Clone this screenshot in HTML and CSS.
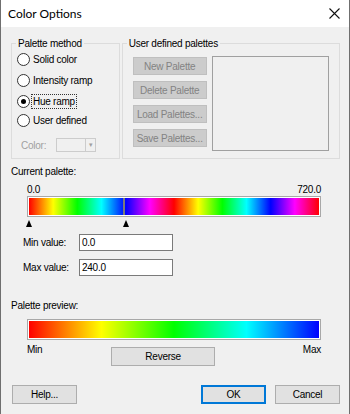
FILE: index.html
```html
<!DOCTYPE html>
<html lang="en">
<head>
<meta charset="UTF-8">
<title>Color Options</title>
<link rel="stylesheet" href="styles.css">
</head>
<body>
<div class="dialog">
  <header class="titlebar">
    <span class="title">Color Options</span>
    <svg class="close-icon" width="11" height="11" viewBox="0 0 11 11">
      <path d="M0.5 0.5 L10.5 10.5 M10.5 0.5 L0.5 10.5" stroke="#111" stroke-width="1.1" fill="none"/>
    </svg>
  </header>

  <main class="content">
    <div class="top-row">
      <fieldset class="group method-group">
        <legend>Palette method</legend>
        <div class="method-body">
          <div class="radio-row"><span class="radio"></span><span>Solid color</span></div>
          <div class="radio-row"><span class="radio"></span><span>Intensity ramp</span></div>
          <div class="radio-row"><span class="radio checked"></span><span class="focus">Hue ramp</span></div>
          <div class="radio-row last"><span class="radio"></span><span>User defined</span></div>
          <div class="color-row">
            <span class="disabled-text">Color:</span>
            <span class="combo"><span class="combo-field"></span><span class="combo-arrow">&#9662;</span></span>
          </div>
        </div>
      </fieldset>

      <fieldset class="group user-group">
        <legend>User defined palettes</legend>
        <div class="user-body">
          <div class="btn-column">
            <button class="btn" disabled>New Palette</button>
            <button class="btn" disabled>Delete Palette</button>
            <button class="btn" disabled>Load Palettes...</button>
            <button class="btn" disabled>Save Palettes...</button>
          </div>
          <div class="listbox"></div>
        </div>
      </fieldset>
    </div>

    <div class="section-label">Current palette:</div>
    <div class="palette-area">
      <div class="scale-row"><span>0.0</span><span>720.0</span></div>
      <div class="bar-frame">
        <div class="bar hue-full">
          <span class="split-mark"></span>
        </div>
      </div>
      <div class="marker-row">
        <span class="marker marker-start"></span>
        <span class="marker marker-split"></span>
      </div>
    </div>

    <div class="value-row">
      <label>Min value:</label>
      <div class="textbox">0.0</div>
    </div>
    <div class="value-row">
      <label>Max value:</label>
      <div class="textbox">240.0</div>
    </div>

    <div class="section-label preview-label">Palette preview:</div>
    <div class="palette-area">
      <div class="bar-frame preview-frame">
        <div class="bar hue-preview"></div>
      </div>
      <div class="preview-foot">
        <span>Min</span>
        <button class="btn reverse-btn">Reverse</button>
        <span>Max</span>
      </div>
    </div>

    <div class="footer">
      <button class="btn">Help...</button>
      <div class="footer-right">
        <button class="btn default-btn">OK</button>
        <button class="btn">Cancel</button>
      </div>
    </div>
  </main>
</div>
</body>
</html>
```

FILE: styles.css
```css
/* Color Options dialog */
body {
  margin: 0;
  font-family: 'Liberation Sans', Arial, sans-serif;
  font-size: 10px;
  letter-spacing: -0.25px;
  color: #000;
}

.dialog {
  width: 350px;
  height: 414px;
  box-sizing: border-box;
  border-left: 1px solid #6f6f6f;
  border-right: 1px solid #6f6f6f;
  background: #f0f0f0;
  display: flex;
  flex-direction: column;
}

.titlebar {
  height: 27px;
  background: #fff;
  display: flex;
  align-items: center;
  justify-content: space-between;
  padding: 0 9px 0 7px;
  flex-shrink: 0;
}

.title {
  font-family: Lato, 'Liberation Sans', sans-serif;
  font-size: 12px;
  letter-spacing: 0;
  color: #000;
}

.close-icon {
  display: block;
}

.content {
  padding: 10px 9px 0 10px;
}

.top-row {
  display: flex;
  gap: 2px;
}

.group {
  margin: 0;
  padding: 0;
  border: 1px solid #dcdcdc;
  height: 122px;
  box-sizing: border-box;
  min-width: 0;
}

.group legend {
  margin-left: 4px;
  padding: 0 2px;
  line-height: 13px;
}

.method-group {
  width: 109px;
}

.method-body {
  padding-left: 5px;
}

.user-group {
  width: 219px;
}

.radio-row {
  display: flex;
  align-items: center;
  gap: 3px;
  height: 21px;
}

.radio-row:first-child {
  margin-top: -1px;
}

.radio-row.last {
  height: 17px;
}

.radio {
  width: 11px;
  height: 11px;
  border: 1px solid #333;
  border-radius: 50%;
  background: #fff;
  position: relative;
  flex-shrink: 0;
}

.radio.checked::after {
  content: "";
  position: absolute;
  left: 3px;
  top: 3px;
  width: 5px;
  height: 5px;
  border-radius: 50%;
  background: #000;
}

.focus {
  outline: 1px dotted #333;
  outline-offset: 1px;
}

.color-row {
  display: flex;
  align-items: center;
  gap: 10px;
  margin-top: 9px;
  padding-left: 4px;
}

.disabled-text {
  color: #a0a0a0;
}

.combo {
  display: flex;
  width: 40px;
  height: 14px;
  box-sizing: border-box;
  border: 1px solid #cccccc;
  background: #f0f0f0;
}

.combo-field {
  flex: 1;
  border-right: 1px solid #cccccc;
}

.combo-arrow {
  width: 9px;
  font-size: 7px;
  line-height: 12px;
  text-align: center;
  color: #a0a0a0;
}

.user-body {
  display: flex;
  gap: 5px;
  margin: 6px 10px 0 10px;
}

.btn-column {
  display: flex;
  flex-direction: column;
  gap: 6px;
  padding-top: 1px;
}

.btn {
  font-family: 'Liberation Sans', Arial, sans-serif;
  font-size: 10px;
  letter-spacing: -0.25px;
  white-space: nowrap;
  height: 19px;
  padding: 0;
  border: 1px solid #adadad;
  background: #e1e1e1;
  color: #000;
  box-sizing: border-box;
}

.btn-column .btn {
  width: 74px;
  height: 18px;
}

.btn:disabled {
  background: #cccccc;
  border-color: #bfbfbf;
  color: #838383;
}

.listbox {
  width: 118px;
  height: 95px;
  box-sizing: border-box;
  border: 1px solid #a0a0a0;
  background: #f0f0f0;
}

.section-label {
  line-height: 13px;
  margin-top: 6px;
}

.palette-area {
  margin-left: 16px;
  width: 294px;
}

.scale-row {
  display: flex;
  justify-content: space-between;
  line-height: 13px;
  margin-top: 5px;
}

.bar-frame {
  border: 1px solid #a8a8a8;
  padding: 1px;
  background: #fff;
}

.bar {
  height: 17px;
  position: relative;
}

.hue-full {
  background: linear-gradient(to right,
    #f00, #ff0, #0f0, #0ff, #00f, #f0f,
    #f00, #ff0, #0f0, #0ff, #00f, #f0f, #f00);
}

.split-mark {
  position: absolute;
  top: 0;
  bottom: 0;
  left: 32.5%;
  width: 2px;
  background: #7a7a7a;
}

.marker-row {
  position: relative;
  height: 7px;
  margin-top: 3px;
}

.marker {
  position: absolute;
  top: 0;
  width: 0;
  height: 0;
  border-left: 3.5px solid transparent;
  border-right: 3.5px solid transparent;
  border-bottom: 7px solid #000;
}

.marker-start {
  left: -1px;
}

.marker-split {
  left: 32.7%;
}

.value-row {
  display: flex;
  align-items: center;
  margin-top: 7px;
  padding-left: 12px;
}

.value-row + .value-row {
  margin-top: 8px;
}

.value-row label {
  width: 56px;
}

.textbox {
  width: 94px;
  height: 17px;
  box-sizing: border-box;
  border: 1px solid #7a7a7a;
  background: #fff;
  padding-left: 2px;
  line-height: 15px;
}

.preview-label {
  margin-top: 23px;
}

.preview-frame {
  margin-top: 7px;
}

.hue-preview {
  background: linear-gradient(to right, #f00, #ff0, #0f0, #0ff, #00f);
}

.preview-foot {
  display: flex;
  justify-content: space-between;
  align-items: flex-start;
  line-height: 13px;
  margin-top: 3px;
}

.reverse-btn {
  width: 104px;
  margin-top: 4px;
  margin-right: 19px;
}

.footer {
  display: flex;
  justify-content: space-between;
  margin-top: 19px;
  padding-left: 1px;
}

.footer .btn {
  width: 65px;
}

.footer-right {
  display: flex;
  gap: 9px;
}

.default-btn {
  border-color: #0078d7;
  box-shadow: inset 0 0 0 1px #0078d7;
}
```
